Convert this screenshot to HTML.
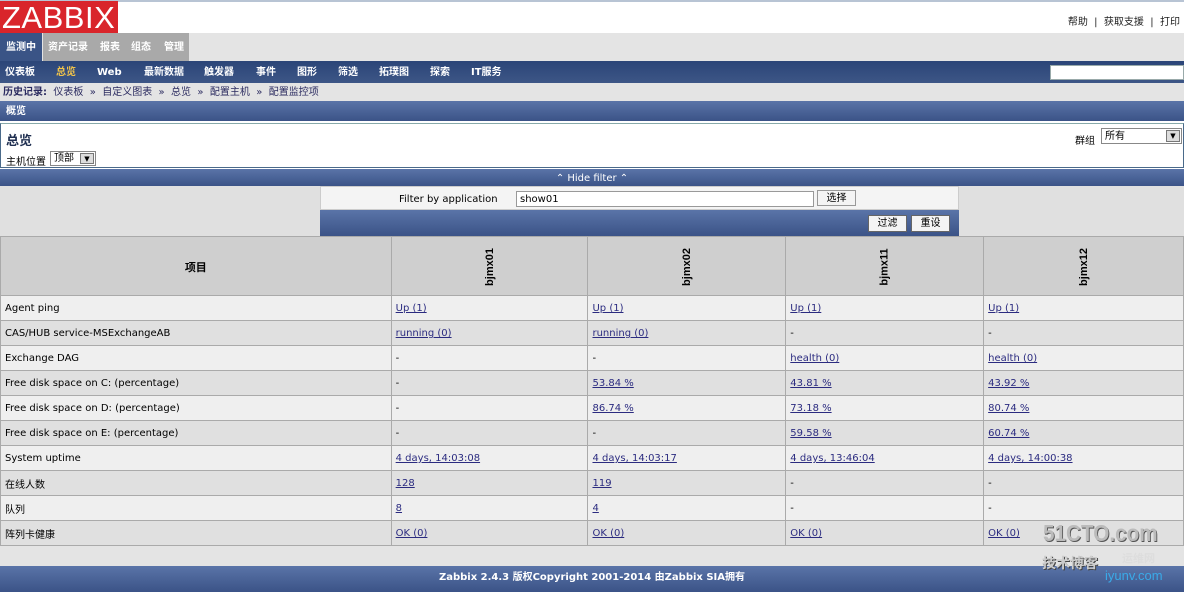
<!DOCTYPE html>
<html><head><meta charset="utf-8"><style>
*{margin:0;padding:0;box-sizing:border-box}
body{width:1184px;height:592px;overflow:hidden;background:#fff;font-family:"DejaVu Sans","Noto Sans CJK SC",sans-serif;font-size:10px;color:#000;position:relative}
.a{position:absolute}
.blue{background:linear-gradient(#5a74a8,#3b5387)}
.dk{background:linear-gradient(#2b4578,#3d5686)}
a{color:#2b2b80;text-decoration:underline}
table{border-collapse:collapse;position:absolute;left:0;top:236px;width:1184px}
td{border:1px solid #aaa;height:25px;padding:1px 4px 0;font-size:10px}
tr:nth-child(even) td{background:#efefef}
tr:nth-child(odd) td{background:#e0e0e0}
tr.h td{background:#cfcfcf;height:59px;font-weight:bold;text-align:center;font-family:"Liberation Sans","Noto Sans CJK SC",sans-serif;font-size:11px}
.v{display:inline-block;transform:rotate(-90deg)}
</style></head><body>
<div class="a" style="left:0;top:0;width:1184px;height:2px;background:#b8c4d4"></div>
<div class="a" style="left:0;top:1px;width:118px;height:32px;background:#d9252b;color:#fff;font-family:'Liberation Sans',sans-serif;font-size:31px;line-height:33px;padding-left:2px;letter-spacing:0.5px">ZABBIX</div>
<div class="a" style="right:4px;top:13px;font-size:10px;color:#222">帮助 &nbsp;|&nbsp; 获取支援 &nbsp;|&nbsp; 打印</div>
<div class="a" style="left:0;top:33px;width:1184px;height:28px;background:#e4e4e4"></div>
<div class="a" style="left:0;top:33px;width:42px;height:28px;background:#3a5486;color:#fff;font-weight:bold;line-height:30px;text-align:center">监测中</div>
<div class="a" style="left:43px;top:33px;width:146px;height:28px;background:#a9a9a9"></div>
<div class="a" style="left:43px;top:33px;height:28px;line-height:30px;color:#fff;font-weight:bold"><span style="position:absolute;left:5px;white-space:nowrap">资产记录</span><span style="position:absolute;left:57px;white-space:nowrap">报表</span><span style="position:absolute;left:88px;white-space:nowrap">组态</span><span style="position:absolute;left:121px;white-space:nowrap">管理</span></div>
<div class="a dk" style="left:0;top:61px;width:1184px;height:22px"></div>
<div class="a" style="left:0;top:62px;height:22px;line-height:22px;color:#fff;font-weight:bold;white-space:nowrap">
<span class="a" style="left:5px">仪表板</span><span class="a" style="left:56px;color:#f2c44a">总览</span><span class="a" style="left:97px">Web</span><span class="a" style="left:144px">最新数据</span><span class="a" style="left:204px">触发器</span><span class="a" style="left:256px">事件</span><span class="a" style="left:297px">图形</span><span class="a" style="left:338px">筛选</span><span class="a" style="left:379px">拓璞图</span><span class="a" style="left:430px">探索</span><span class="a" style="left:471px">IT服务</span></div>
<div class="a" style="left:1050px;top:65px;width:134px;height:15px;background:#fff;border:1px solid #9aa"></div>
<div class="a" style="left:0;top:83px;width:1184px;height:18px;background:#e4e4e4;line-height:20px;padding-left:3px;color:#2b2b60;white-space:nowrap"><b>历史记录:</b> &nbsp;仪表板 &nbsp;» &nbsp;自定义图表 &nbsp;» &nbsp;总览 &nbsp;» &nbsp;配置主机 &nbsp;» &nbsp;配置监控项</div>
<div class="a blue" style="left:0;top:101px;width:1184px;height:20px;color:#fff;font-weight:bold;line-height:22px;padding-left:6px">概览</div>
<div class="a" style="left:0;top:123px;width:1184px;height:45px;border:1px solid #4a6a8a;border-top:1px solid #8aa"></div>
<div class="a" style="left:6px;top:130px;font-size:13px;font-weight:bold;color:#1e2e50">总览</div>
<div class="a" style="left:6px;top:153px">主机位置</div>
<div class="a" style="left:50px;top:151px;width:46px;height:15px;border:1px solid #888;background:#fff;padding-left:3px;line-height:14px">顶部<span style="position:absolute;right:1px;top:1px;width:14px;height:11px;background:#ddd;border:1px solid #777;font-size:7px;text-align:center;line-height:10px">▼</span></div>
<div class="a" style="left:1075px;top:132px">群组</div>
<div class="a" style="left:1101px;top:128px;width:81px;height:16px;border:1px solid #888;background:#fff;padding-left:3px;line-height:16px">所有<span style="position:absolute;right:1px;top:1px;width:14px;height:12px;background:#ddd;border:1px solid #777;font-size:7px;text-align:center;line-height:11px">▼</span></div>
<div class="a blue" style="left:0;top:169px;width:1184px;height:17px;color:#fff;text-align:center;line-height:19px;font-size:10px">⌃ Hide filter ⌃</div>
<div class="a" style="left:0;top:186px;width:1184px;height:50px;background:#e0e0e0"></div>
<div class="a" style="left:320px;top:186px;width:639px;height:24px;background:#f4f4f4;border:1px solid #ccc"></div>
<div class="a" style="left:399px;top:194px">Filter by application</div>
<div class="a" style="left:516px;top:191px;width:298px;height:16px;background:#fff;border:1px solid #999;padding-left:3px;line-height:15px">show01</div>
<div class="a" style="left:817px;top:190px;width:39px;height:16px;background:#f4f4f4;border:1px solid #999;text-align:center;line-height:16px">选择</div>
<div class="a blue" style="left:320px;top:210px;width:639px;height:26px"></div>
<div class="a" style="left:868px;top:215px;width:39px;height:17px;background:#f4f4f4;border:1px solid #666;text-align:center;line-height:16px">过滤</div>
<div class="a" style="left:911px;top:215px;width:39px;height:17px;background:#f4f4f4;border:1px solid #666;text-align:center;line-height:16px">重设</div>
<table>
<colgroup><col style="width:391px"><col style="width:197px"><col style="width:198px"><col style="width:198px"><col style="width:200px"></colgroup>
<tr class="h"><td>项目</td><td><span class="v">bjmx01</span></td><td><span class="v">bjmx02</span></td><td><span class="v">bjmx11</span></td><td><span class="v">bjmx12</span></td></tr>
<tr><td>Agent ping</td><td><a>Up (1)</a></td><td><a>Up (1)</a></td><td><a>Up (1)</a></td><td><a>Up (1)</a></td></tr>
<tr><td>CAS/HUB service-MSExchangeAB</td><td><a>running (0)</a></td><td><a>running (0)</a></td><td>-</td><td>-</td></tr>
<tr><td>Exchange DAG</td><td>-</td><td>-</td><td><a>health (0)</a></td><td><a>health (0)</a></td></tr>
<tr><td>Free disk space on C: (percentage)</td><td>-</td><td><a>53.84 %</a></td><td><a>43.81 %</a></td><td><a>43.92 %</a></td></tr>
<tr><td>Free disk space on D: (percentage)</td><td>-</td><td><a>86.74 %</a></td><td><a>73.18 %</a></td><td><a>80.74 %</a></td></tr>
<tr><td>Free disk space on E: (percentage)</td><td>-</td><td>-</td><td><a>59.58 %</a></td><td><a>60.74 %</a></td></tr>
<tr><td>System uptime</td><td><a>4 days, 14:03:08</a></td><td><a>4 days, 14:03:17</a></td><td><a>4 days, 13:46:04</a></td><td><a>4 days, 14:00:38</a></td></tr>
<tr><td>在线人数</td><td><a>128</a></td><td><a>119</a></td><td>-</td><td>-</td></tr>
<tr><td>队列</td><td><a>8</a></td><td><a>4</a></td><td>-</td><td>-</td></tr>
<tr><td>阵列卡健康</td><td><a>OK (0)</a></td><td><a>OK (0)</a></td><td><a>OK (0)</a></td><td><a>OK (0)</a></td></tr>
</table>
<div class="a" style="left:0;top:546px;width:1184px;height:20px;background:#e4e4e4"></div>
<div class="a blue" style="left:0;top:566px;width:1184px;height:26px;color:#fff;font-weight:bold;text-align:center;line-height:24px">Zabbix 2.4.3 版权Copyright 2001-2014 由Zabbix SIA拥有</div>
<div class="a" style="left:1043px;top:520px;font-family:'Liberation Sans',sans-serif;font-size:23px;font-weight:bold;color:#bbb;text-shadow:1px 1px 0 #555;transform:scaleX(0.9);transform-origin:left">51CTO.com</div>
<div class="a" style="left:1042px;top:553px;font-size:14px;font-weight:bold;color:#ccc;text-shadow:1px 1px 0 #444">技术博客</div>
<div class="a" style="left:1122px;top:550px;font-size:11px;font-weight:bold;color:#ddd">运维网</div>
<div class="a" style="left:1105px;top:568px;font-size:13px;color:#3aaae8;font-family:'Liberation Sans',sans-serif">iyunv.com</div>
</body></html>
